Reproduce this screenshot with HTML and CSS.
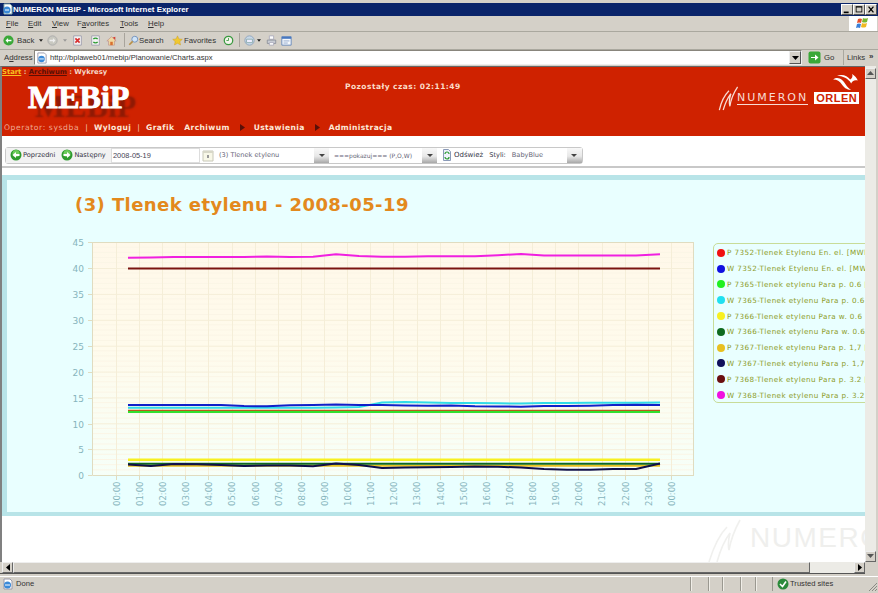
FILE: index.html
```html
<!DOCTYPE html>
<html lang="pl">
<head>
<meta charset="utf-8">
<title>NUMERON MEBIP</title>
<link rel="stylesheet" href="styles.css">
</head>
<body>
<div class="window">
  <div class="titlebar">
    <svg class="ico12" viewBox="0 0 12 12"><path d="M2 1h6l2 2v8H2z" fill="#fff" stroke="#8aa"/><circle cx="5" cy="7" r="3.500" fill="#3a8ad8"/><path d="M3 7h4" stroke="#fff"/></svg>
    <span class="title-text">NUMERON MEBIP - Microsoft Internet Explorer</span>
    <div class="winbtns">
      <span class="winbtn"><svg viewBox="0 0 12 11"><rect x="2" y="8" width="6" height="2" fill="#000"/></svg></span>
      <span class="winbtn"><svg viewBox="0 0 12 11"><rect x="2.500" y="2.500" width="7" height="6" fill="none" stroke="#000"/><path d="M2 2h8" stroke="#000"/></svg></span>
      <span class="winbtn"><svg viewBox="0 0 12 11"><path d="M3 2l6 7M9 2l-6 7" stroke="#000" stroke-width="1.600"/></svg></span>
    </div>
  </div>

  <div class="menubar">
    <span class="m-file"><u>F</u>ile</span>
    <span class="m-edit"><u>E</u>dit</span>
    <span class="m-view"><u>V</u>iew</span>
    <span class="m-fav">F<u>a</u>vorites</span>
    <span class="m-tools"><u>T</u>ools</span>
    <span class="m-help"><u>H</u>elp</span>
    <span class="winlogo"><svg viewBox="0 0 14 13" width="14" height="13"><path d="M2 2q2-1 4 0l-1 4q-2-1-4 0z" fill="#e8502a"/><path d="M7 1q2 1 5 0l-1 4q-3 1-5 0z" fill="#7ab82e"/><path d="M1 7q2-1 4 0l-1 4q-2-1-4 0z" fill="#3a80d8"/><path d="M6 6q2 1 5 0l-1 4q-3 1-5 0z" fill="#f0b820"/></svg></span>
  </div>

  <div class="toolbar">
    <svg class="ico13 t-back" viewBox="0 0 13 13"><circle cx="6.500" cy="6.500" r="6" fill="#3aa838"/><path d="M3 6.500l3-3v2h4v2H6v2z" fill="#fff"/></svg>
    <span class="t-backlabel">Back</span>
    <svg class="ico5 t-dd1" viewBox="0 0 5 3"><path d="M0 0h5L2.500 3z" fill="#222"/></svg>
    <svg class="ico13 t-fwd" viewBox="0 0 13 13"><circle cx="6.500" cy="6.500" r="5.500" fill="#c8c8c0" stroke="#aaa"/><path d="M10 6.500l-3-3v2H3v2h4v2z" fill="#eee"/></svg>
    <svg class="ico5 t-dd2" viewBox="0 0 5 3"><path d="M0 0h5L2.500 3z" fill="#999"/></svg>
    <svg class="ico13 t-stop" viewBox="0 0 13 13"><path d="M2 1h9v11H2z" fill="#f4f4f4" stroke="#99a"/><path d="M4 4l5 5M9 4l-5 5" stroke="#d83030" stroke-width="2"/></svg>
    <svg class="ico13 t-ref" viewBox="0 0 13 13"><path d="M2 1h9v11H2z" fill="#f4f4f4" stroke="#99a"/><path d="M4 5a3 3 0 0 1 5 0M9 8a3 3 0 0 1-5 0" fill="none" stroke="#2a9a30" stroke-width="1.600"/></svg>
    <svg class="ico13 t-home" viewBox="0 0 13 13"><path d="M1 7l5.500-5L12 7h-2v5H3V7z" fill="#f0d8a0" stroke="#b88" stroke-width=".7"/><path d="M5 8h3v4H5z" fill="#d87030"/><path d="M8 3l3 3V2z" fill="#d84030"/></svg>
    <span class="t-sep t-sep1"></span>
    <svg class="ico13 t-search" viewBox="0 0 13 13"><circle cx="8" cy="5" r="3.500" fill="#cfe4f8" stroke="#6a8ab8"/><path d="M5.500 7.500L1.500 11.500" stroke="#b89048" stroke-width="2"/></svg>
    <span class="t-searchlabel">Search</span>
    <svg class="ico13 t-star" viewBox="0 0 13 13"><path d="M6.500 1l1.700 3.600 4 .5-2.900 2.700.8 4-3.600-2-3.600 2 .8-4L.8 5.100l4-.5z" fill="#f0c830" stroke="#c89820" stroke-width=".5"/></svg>
    <span class="t-favlabel">Favorites</span>
    <svg class="ico13 t-hist" viewBox="0 0 13 13"><circle cx="6.500" cy="6.500" r="5" fill="#f4f4ec" stroke="#3a9a40" stroke-width="1.500"/><path d="M6.500 3.500v3H4" fill="none" stroke="#3a9a40"/></svg>
    <span class="t-sep t-sep2"></span>
    <svg class="ico13 t-mail" viewBox="0 0 13 13"><circle cx="6.500" cy="6.500" r="5.500" fill="#c8d8e8" stroke="#8aa0b8"/><path d="M3 5h7v4H3z" fill="#eef" stroke="#8aa"/></svg>
    <svg class="ico5 t-dd3" viewBox="0 0 5 3"><path d="M0 0h5L2.500 3z" fill="#222"/></svg>
    <svg class="ico13 t-print" viewBox="0 0 13 13"><path d="M4 1h5v4H4z" fill="#fff" stroke="#aab"/><path d="M1.500 6h10v4h-10z" fill="#c8ccd4" stroke="#8a8e98"/><path d="M4 9h5v3H4z" fill="#fff" stroke="#aab"/></svg>
    <svg class="ico13 t-edit" viewBox="0 0 13 13"><path d="M1 2h11v10H1z" fill="#f4f8fc" stroke="#5a80b8"/><path d="M1 2h11v2.500H1z" fill="#4878c0"/><path d="M3 7h7M3 9.500h5" stroke="#88a0c8"/></svg>
  </div>

  <div class="addressbar">
    <span class="a-label">A<u>d</u>dress</span>
    <div class="a-field">
      <svg class="ico12" viewBox="0 0 13 13"><path d="M2 1h7l2 2v9H2z" fill="#fff" stroke="#99a"/><circle cx="6" cy="7.500" r="3.500" fill="#3a8ad8"/><path d="M3.500 7.500h5" stroke="#fff"/></svg>
      <span class="a-url">http://bplaweb01/mebip/Planowanie/Charts.aspx</span>
      <span class="a-drop"><svg viewBox="0 0 7 4" width="7" height="4"><path d="M0 0h7L3.500 4z" fill="#000"/></svg></span>
    </div>
    <svg class="ico13 a-go" viewBox="0 0 13 13"><rect x=".5" y=".5" width="12" height="12" rx="2" fill="#3aa838"/><path d="M3 6h4V3.500L10.500 6.500 7 9.500V7H3z" fill="#fff"/></svg>
    <span class="a-golabel">Go</span>
    <span class="a-sep"></span>
    <span class="a-links">Links</span>
    <span class="a-more">»</span>
  </div>

  <div class="client">
    <div class="viewport">
      <header class="site-head">
        <nav class="crumbs"><a class="c-start">Start</a><span> : </span><a class="c-arch">Archiwum</a><span> : </span><b>Wykresy</b></nav>
        <div class="head-main">
          <div class="mebip">MEBiP</div>
          <div class="timer">Pozostały czas: 02:11:49</div>
          <div class="brands">
            <div class="numeron">
              <svg class="num-ico" viewBox="0 0 20 26" width="20" height="25"><path d="M1 25C3 16 7 9 11 5M5 25C7 18 10 12 13 8C11 14 11 18 12 21C13 14 16 7 20 1" fill="none" stroke="#f8dcd4" stroke-width="1.300"/></svg>
              <span class="num-text">NUMERON</span>
            </div>
            <div class="orlen">
              <svg class="eagle" viewBox="0 0 26 18" width="25" height="17"><path d="M0 7C5 3 10 7 13 12C15 15 17 17 19 18C14 18 11 15 9 12C7 9 4 7 0 7z" fill="#fff"/><path d="M4 3C10 1 15 3 18 7C20 5 21 4 20 1C23 3 25 5 26 8C22 7 20 9 19 11C16 6 10 3 4 3z" fill="#fff"/></svg>
              <span class="orlen-box">ORLEN</span>
            </div>
          </div>
        </div>
        <div class="opnav">
          <span class="op">Operator: sysdba</span><span class="pipe">|</span><a>Wyloguj</a><span class="pipe">|</span><a>Grafik</a><a class="gap-a">Archiwum</a>
          <svg class="arr" viewBox="0 0 5 7" width="5" height="7"><path d="M0 0l5 3.500L0 7z" fill="#5a1008"/></svg><a>Ustawienia</a>
          <svg class="arr" viewBox="0 0 5 7" width="5" height="7"><path d="M0 0l5 3.500L0 7z" fill="#5a1008"/></svg><a>Administracja</a>
        </div>
      </header>

      <div class="toolstrip">
        <div class="tools">
          <div class="pager">
            <svg class="navico" viewBox="0 0 12 12"><circle cx="6" cy="6" r="5.500" fill="#2f9a2f"/><circle cx="6" cy="4.500" r="3.500" fill="#6ccb5a"/><path d="M2.500 6l3.500-3v2h3.500v2H6v2z" fill="#fff"/></svg>
            <span class="nav-l">Poprzedni</span>
            <svg class="navico nav2" viewBox="0 0 12 12"><circle cx="6" cy="6" r="5.500" fill="#2f9a2f"/><circle cx="6" cy="4.500" r="3.500" fill="#6ccb5a"/><path d="M9.500 6L6 3v2H2.500v2H6v2z" fill="#fff"/></svg>
            <span class="nav-l">Następny</span>
          </div>
          <div class="datebox">2008-05-19</div>
          <svg class="calico" viewBox="0 0 14 14" width="14" height="14"><path d="M2 3h10v10H2z" fill="#f8f8e8" stroke="#c8c8b8"/><path d="M2 3h10v2H2z" fill="#d8d8c8"/><path d="M7 7v3" stroke="#999" stroke-width="2"/></svg>
          <div class="sel sel-1"><span class="sel-t">(3) Tlenek etylenu</span><span class="dd"><svg viewBox="0 0 6 3" width="6" height="3"><path d="M0 0h6L3 3z" fill="#444"/></svg></span></div>
          <div class="sel sel-2"><span class="sel-t">===pokazuj=== (P,O,W)</span><span class="dd"><svg viewBox="0 0 6 3" width="6" height="3"><path d="M0 0h6L3 3z" fill="#444"/></svg></span></div>
          <svg class="refico" viewBox="0 0 8 12" width="8" height="12"><path d="M.5.500h5l2 2v9h-7z" fill="#eef2fa" stroke="#8a9ab8"/><path d="M2 5a2 2 0 0 1 4 0M6 8a2 2 0 0 1-4 0" fill="none" stroke="#2a9a30" stroke-width="1.200"/></svg>
          <span class="nav-l ref-l">Odśwież</span>
          <span class="nav-l style-l">Styli:</span>
          <div class="sel sel-3"><span class="sel-t">BabyBlue</span><span class="dd"><svg viewBox="0 0 6 3" width="6" height="3"><path d="M0 0h6L3 3z" fill="#444"/></svg></span></div>
        </div>
      </div>

      <main class="panel">
        <h1 class="chart-title">(3) Tlenek etylenu - 2008-05-19</h1>
        <div class="chart-row">
          <svg class="chart" viewBox="7 235 700 277" width="700" height="277">
            <defs>
              <linearGradient id="plotbg" x1="0" y1="0" x2="0" y2="1">
                <stop offset="0" stop-color="#fff8e9"/><stop offset=".45" stop-color="#fffbec"/><stop offset="1" stop-color="#f6fff8"/>
              </linearGradient>
            </defs>
            <rect x="92" y="243" width="602" height="233.500" fill="url(#plotbg)"/>
            <path class="minor" d="M92 248.200H694M92 253.400H694M92 258.500H694M92 263.700H694M92 274.100H694M92 279.300H694M92 284.400H694M92 289.600H694M92 299.900H694M92 305.100H694M92 310.300H694M92 315.500H694M92 325.800H694M92 331H694M92 336.200H694M92 341.400H694M92 351.800H694M92 356.900H694M92 362.100H694M92 367.300H694M92 377.600H694M92 382.800H694M92 388H694M92 393.200H694M92 403.600H694M92 408.700H694M92 413.900H694M92 419.100H694M92 429.400H694M92 434.600H694M92 439.800H694M92 445H694M92 455.300H694M92 460.500H694M92 465.700H694M92 470.900H694"/>
            <path class="major" d="M92 269.500H694M92 295.400H694M92 321.300H694M92 347.200H694M92 373.100H694M92 398.900H694M92 424.800H694M92 450.700H694"/>
            <path class="major" d="M116.500 243V476M139.500 243V476M162.500 243V476M185.500 243V476M208.500 243V476M232.500 243V476M255.500 243V476M278.500 243V476M301.500 243V476M324.500 243V476M347.500 243V476M370.500 243V476M393.500 243V476M417.500 243V476M440.500 243V476M463.500 243V476M486.500 243V476M509.500 243V476M532.500 243V476M555.500 243V476M578.500 243V476M602.500 243V476M625.500 243V476M648.500 243V476M671.500 243V476"/>
            <path class="axis" d="M92.500 243V476.500H694M693.500 243V476.500M92.500 243.500H694"/>
            <path class="axis" d="M88 243.500H92M88 269.500H92M88 295.500H92M88 321.500H92M88 347.500H92M88 373.500H92M88 399.500H92M88 425.500H92M88 450.500H92M88 476.500H92"/>
            <path class="axis" d="M116.500 477V481M139.500 477V481M162.500 477V481M185.500 477V481M208.500 477V481M232.500 477V481M255.500 477V481M278.500 477V481M301.500 477V481M324.500 477V481M347.500 477V481M370.500 477V481M393.500 477V481M417.500 477V481M440.500 477V481M463.500 477V481M486.500 477V481M509.500 477V481M532.500 477V481M555.500 477V481M578.500 477V481M602.500 477V481M625.500 477V481M648.500 477V481M671.500 477V481"/>

            <g class="ylab">
              <text x="84" y="246.500">45</text><text x="84" y="272.500">40</text><text x="84" y="298.500">35</text><text x="84" y="324.500">30</text><text x="84" y="350.500">25</text><text x="84" y="376.500">20</text><text x="84" y="402.500">15</text><text x="84" y="428.500">10</text><text x="84" y="453.500">5</text><text x="84" y="479.500">0</text>
            </g>
            <g class="xlab">
              <text transform="translate(120 507) rotate(-90)">00:00</text>
              <text transform="translate(143 507) rotate(-90)">01:00</text>
              <text transform="translate(166 507) rotate(-90)">02:00</text>
              <text transform="translate(189 507) rotate(-90)">03:00</text>
              <text transform="translate(212 507) rotate(-90)">04:00</text>
              <text transform="translate(235 507) rotate(-90)">05:00</text>
              <text transform="translate(259 507) rotate(-90)">06:00</text>
              <text transform="translate(282 507) rotate(-90)">07:00</text>
              <text transform="translate(305 507) rotate(-90)">08:00</text>
              <text transform="translate(328 507) rotate(-90)">09:00</text>
              <text transform="translate(351 507) rotate(-90)">10:00</text>
              <text transform="translate(374 507) rotate(-90)">11:00</text>
              <text transform="translate(397 507) rotate(-90)">12:00</text>
              <text transform="translate(420 507) rotate(-90)">13:00</text>
              <text transform="translate(444 507) rotate(-90)">14:00</text>
              <text transform="translate(467 507) rotate(-90)">15:00</text>
              <text transform="translate(490 507) rotate(-90)">16:00</text>
              <text transform="translate(513 507) rotate(-90)">17:00</text>
              <text transform="translate(536 507) rotate(-90)">18:00</text>
              <text transform="translate(559 507) rotate(-90)">19:00</text>
              <text transform="translate(582 507) rotate(-90)">20:00</text>
              <text transform="translate(605 507) rotate(-90)">21:00</text>
              <text transform="translate(629 507) rotate(-90)">22:00</text>
              <text transform="translate(652 507) rotate(-90)">23:00</text>
              <text transform="translate(675 507) rotate(-90)">00:00</text>
            </g>

            <polyline class="s s-red" points="128,411.400 660,411.400"/>
            <polyline class="s s-green" points="128,412.900 660,412.900"/>
            <polyline class="s s-cyan" points="128,408.800 151,408.800 174,408.800 197,408.800 221,408.800 244,408.800 267,408.800 290,408.800 313,408.800 336,408.500 359,408 372,405.500 382,403.500 405,403 428,403.500 451,404 475,404 498,404.300 521,404.500 544,404 567,404 590,403.800 613,403.800 636,403.800 660,403.500"/>
            <polyline class="s s-blue" points="128,406 151,406 174,406 197,406 221,406 244,407 267,407.300 290,406.300 313,406 336,405.500 359,406 382,406 405,406.500 428,406.800 451,406.500 475,407.300 498,407.500 521,407.700 544,407 567,407 590,406.700 613,406 636,405.700 660,406"/>
            <polyline class="s s-yellow" points="128,460.800 660,460.800"/>
            <polyline class="s s-gold" points="128,466.800 660,466.800"/>
            <polyline class="s s-dgreen" points="128,464.800 660,464.800"/>
            <polyline class="s s-navy" points="128,465.500 151,467 174,465 197,465.300 221,466 244,467 267,466.500 290,466.500 313,467.300 336,464.500 359,466 382,469 405,468.500 428,468.300 451,468 475,467.500 498,467.800 521,468.500 544,470 567,470.800 590,470.800 613,470 636,470 660,464.500"/>
            <polyline class="s s-brown" points="128,269.500 660,269.500"/>
            <polyline class="s s-mag" points="128,258.700 151,258.500 174,258 197,258 221,258 244,258 267,257.400 290,258 313,257.800 336,255.300 359,257 382,257.800 405,257.800 428,257.300 451,257.200 475,257.200 498,256.300 521,255 544,256.500 567,256.500 590,256.600 613,256.600 636,256.500 660,255.300"/>
          </svg>
          <ul class="legend">
            <li><i class="dot d1"></i>P 7352-Tlenek Etylenu En. el. [MWh]</li>
            <li><i class="dot d2"></i>W 7352-Tlenek Etylenu En. el. [MWh]</li>
            <li><i class="dot d3"></i>P 7365-Tlenek etylenu Para p. 0.6 [t/h]</li>
            <li><i class="dot d4"></i>W 7365-Tlenek etylenu Para p. 0.6 [t/h]</li>
            <li><i class="dot d5"></i>P 7366-Tlenek etylenu Para w. 0.6 [t/h]</li>
            <li><i class="dot d6"></i>W 7366-Tlenek etylenu Para w. 0.6 [t/h]</li>
            <li><i class="dot d7"></i>P 7367-Tlenek etylenu Para p. 1,7 [t/h]</li>
            <li><i class="dot d8"></i>W 7367-Tlenek etylenu Para p. 1,7 [t/h]</li>
            <li><i class="dot d9"></i>P 7368-Tlenek etylenu Para p. 3.2 [t/h]</li>
            <li><i class="dot d10"></i>W 7368-Tlenek etylenu Para p. 3.2 [t/h]</li>
          </ul>
        </div>
      </main>

      <div class="watermark">
        <svg viewBox="0 0 34 44" width="34" height="44"><path d="M2 43C6 30 12 16 20 8M10 43C13 32 17 22 23 14C21 22 21 27 22 31C24 20 28 10 33 1" fill="none" stroke="#f0f0ee" stroke-width="1.600"/></svg>
        <span>NUMERON</span>
      </div>
    </div>
    <div class="vscroll">
      <span class="sbtn"><svg viewBox="0 0 7 4" width="7" height="4"><path d="M0 4h7L3.500 0z" fill="#555"/></svg></span>
      <span class="sbtn"><svg viewBox="0 0 7 4" width="7" height="4"><path d="M0 0h7L3.500 4z" fill="#555"/></svg></span>
    </div>
  </div>

  <div class="hscroll">
    <span class="sbtn"><svg viewBox="0 0 4 7" width="4" height="7"><path d="M4 0v7L0 3.500z" fill="#000"/></svg></span>
    <span class="hthumb"></span>
    <span class="htrack"></span>
    <span class="sbtn"><svg viewBox="0 0 4 7" width="4" height="7"><path d="M0 0v7l4-3.500z" fill="#000"/></svg></span>
  </div>

  <div class="statusbar">
    <svg class="ico12" viewBox="0 0 12 12"><path d="M2 1h6l2 2v8H2z" fill="#fff" stroke="#99a"/><circle cx="5.500" cy="7" r="3.500" fill="#3a8ad8"/><path d="M3 7h5" stroke="#fff"/></svg>
    <span class="st-done">Done</span>
    <span class="st-cell st-c1"></span><span class="st-cell st-c2"></span><span class="st-cell st-c3"></span><span class="st-cell st-c4"></span><span class="st-cell st-c5"></span>
    <span class="st-zone">
      <svg class="ico12" viewBox="0 0 12 12"><circle cx="6" cy="6" r="5.500" fill="#2a8a3a"/><path d="M3 6l2.500 2.500L9 3.500" fill="none" stroke="#fff" stroke-width="1.600"/></svg>
      Trusted sites
    </span>
    <svg class="grip" viewBox="0 0 11 11" width="11" height="11"><path d="M10 2l-8 8M10 5l-5 5M10 8l-2 2" stroke="#8a8a84"/></svg>
  </div>
</div>
</body>
</html>
```

FILE: styles.css
```css
* { box-sizing: border-box; }
html, body { margin: 0; padding: 0; overflow: hidden; }
body { font-family: "Liberation Sans", Arial, sans-serif; background: #d4d0c8; }
.window { width: 878px; height: 593px; display: flex; flex-direction: column; overflow: hidden; background: #d4d0c8; color: #222; font-size: 7.800px; }
svg { display: block; flex: none; }
.ico12 { width: 12px; height: 12px; }
.ico13 { width: 11px; height: 11px; }
.ico5 { width: 4px; height: 3px; }

.titlebar { height: 13px; margin-top: 3px; padding: 0 1px 0 2px; background: #0a246a; display: flex; align-items: center; color: #fff; }
.title-text { margin-left: -1px; font-weight: bold; font-size: 7.900px; }
.winbtns { margin-left: auto; display: flex; }
.winbtn { width: 12px; height: 11px; background: #d4d0c8; border: 1px solid; border-color: #fff #555 #555 #fff; display: flex; align-items: center; justify-content: center; }
.winbtn svg { width: 10px; height: 9px; }

.menubar { height: 17px; display: flex; align-items: center; border-bottom: 1px solid #aaa89f; padding-left: 6px; color: #333; }
.m-file { width: 22px; }
.m-edit { width: 24px; }
.m-view { width: 25px; }
.m-fav { width: 43px; }
.m-tools { width: 28px; }
.winlogo { margin-left: auto; width: 28px; height: 15px; background: #fff; display: flex; align-items: center; justify-content: center; margin-right: 1px; }

.toolbar { height: 18px; display: flex; align-items: center; padding-left: 3px; color: #333; border-bottom: 1px solid #aaa89f; }
.t-backlabel { margin-left: 3px; width: 16px; }
.t-dd1 { margin-left: 6px; }
.t-fwd { margin-left: 4px; }
.t-dd2 { margin-left: 5px; }
.t-stop { margin-left: 5px; }
.t-ref { margin-left: 7px; }
.t-home { margin-left: 5px; }
.t-sep { width: 1px; height: 14px; background: #a8a49c; }
.t-sep1 { margin-left: 7px; }
.t-search { margin-left: 3px; }
.t-searchlabel { margin-left: 0; width: 23px; }
.t-star { margin-left: 10px; }
.t-favlabel { margin-left: 1px; width: 30px; }
.t-hist { margin-left: 9px; }
.t-sep2 { margin-left: 5px; }
.t-mail { margin-left: 4px; }
.t-dd3 { margin-left: 2px; }
.t-print { margin-left: 5px; }
.t-edit { margin-left: 4px; }

.addressbar { height: 17px; display: flex; align-items: center; padding-left: 4px; color: #333; }
.a-label { width: 30px; }
.a-field { width: 768px; height: 15px; background: #fff; border: 1px solid; border-color: #88857c #eee #eee #88857c; display: flex; align-items: center; padding-left: 1px; }
.a-url { margin-left: 2px; color: #333; font-size: 7.600px; }
.a-drop { margin-left: auto; width: 12px; height: 13px; background: #d4d0c8; border: 1px solid; border-color: #eee #555 #555 #eee; display: flex; align-items: center; justify-content: center; }
.a-go { margin-left: 6px; width: 13px; height: 13px; }
.a-golabel { margin-left: 3px; width: 12px; }
.a-sep { width: 1px; height: 15px; background: #aaa89f; margin-left: 7px; }
.a-links { margin-left: 3px; width: 22px; }
.a-more { font-size: 8px; font-weight: bold; margin-top: -3px; }

.client { height: 496px; display: flex; }
.viewport { position: relative; width: 865px; height: 496px; overflow: hidden; background: #fff; border-left: 2px solid #808080; border-top: 1px solid #666; }

.site-head { height: 69px; background: #cf2200; font-family: "DejaVu Sans", Verdana, sans-serif; color: #fff; display: flex; flex-direction: column; overflow: hidden; }
.crumbs { height: 11px; font-size: 6.800px; line-height: 11px; font-weight: bold; color: #f6d8c8; }
.crumbs span { color: #e8c0a0; }
.c-start { color: #f8c020; text-decoration: underline; }
.c-arch { color: #5a0f06; text-decoration: underline; }
.head-main { display: flex; height: 43px; }
.mebip { margin-left: 26px; width: 317px; font-family: "Liberation Serif", serif; font-weight: bold; font-size: 32px; line-height: 30px; margin-top: 4px; color: #fff; -webkit-text-stroke: 1px #fff; text-shadow: 7px 9px 2px rgba(90, 20, 10, .55); }
.timer { font-size: 7.500px; font-weight: bold; letter-spacing: .45px; color: #fbdcc8; margin-top: 4px; width: 373px; }
.brands { display: flex; align-items: flex-end; gap: 6px; height: 26px; }
.numeron { display: flex; align-items: flex-end; }
.num-ico { margin-bottom: -7px; margin-right: -1px; }
.num-text { font-size: 11px; letter-spacing: 2px; color: #f8dcd4; border-bottom: 1px solid #f8dcd4; line-height: 10px; padding-bottom: 1px; margin-bottom: -1px; }
.orlen { display: flex; flex-direction: column; align-items: flex-end; width: 45px; }
.eagle { margin: 0 1px 2px 0; }
.orlen-box { background: #fff; color: #cf2200; font-family: "Liberation Sans", sans-serif; font-weight: bold; font-size: 11px; letter-spacing: .5px; line-height: 12px; width: 45px; text-align: center; }
.opnav { display: flex; align-items: center; height: 14px; padding-left: 2px; font-size: 7.600px; font-weight: bold; letter-spacing: .36px; color: #fde8d8; white-space: nowrap; }
.opnav a { color: #fde8d8; }
.op { font-weight: normal; color: #f0a890; letter-spacing: .6px; }
.pipe { font-weight: normal; margin: 0 6px; color: #f6c8b8; }
.gap-a { margin-left: 10px; }
.arr { margin: 0 9px 0 10px; }

.toolstrip { height: 32px; padding: 11px 0 0 3px; border-bottom: 2px solid #c8c8c8; }
.tools { width: 578px; height: 17px; border: 1px solid #c8c8c8; border-radius: 3px; display: flex; align-items: center; font-family: "DejaVu Sans", Verdana, sans-serif; font-size: 6.600px; color: #445; }
.pager { display: flex; align-items: center; width: 105px; height: 15px; background: #f2f2f2; padding-left: 4px; }
.navico { width: 12px; height: 12px; margin-right: 1px; }
.nav2 { margin-left: 6px; }
.nav-l { color: #334; }
.datebox { width: 89px; height: 15px; border: 1px solid #ddd; background: #fff; padding-left: 1px; line-height: 13px; font-family: "Liberation Sans", sans-serif; font-size: 7.400px; color: #445; }
.calico { margin-left: 1px; }
.sel { display: flex; align-items: center; height: 15px; color: #667; }
.sel-t { white-space: nowrap; }
.sel .dd { margin-left: auto; width: 15px; height: 15px; display: flex; align-items: center; justify-content: center; background: linear-gradient(#f8f8f8, #e8e8e8 55%, #a8a8a8); }
.sel-1 { margin-left: 4px; width: 110px; }
.sel-2 { margin-left: 5px; width: 103px; font-size: 6px; }
.sel-3 { margin-left: 6px; width: 70px; }
.refico { margin-left: 6px; }
.ref-l { margin-left: 3px; font-size: 7px; }
.style-l { margin-left: 6px; }

.panel { position: relative; margin-top: 7px; height: 341px; width: 900px; background: #e9ffff; border: 5px solid #b8e4e8; border-width: 5px 0 4px 5px; overflow: hidden; }
.chart-title { margin: 0; padding: 13px 0 0 68px; height: 54px; font-family: "DejaVu Sans", Verdana, sans-serif; font-weight: bold; font-size: 18px; line-height: 23px; letter-spacing: .42px; color: #e3891d; }
.chart-row { display: flex; align-items: flex-start; }
.chart { margin-right: 6px; }
.chart text { font-family: "DejaVu Sans", Verdana, sans-serif; font-size: 8.500px; fill: #86b4bc; }
.ylab text { text-anchor: end; font-size: 9px; }
.minor { stroke: #fbf5e6; stroke-width: 1; fill: none; }
.major { stroke: #f5eed8; stroke-width: 1; fill: none; }
.axis { stroke: #e0dcc0; stroke-width: 1; fill: none; }
.s { fill: none; stroke-width: 2; stroke-linejoin: round; stroke-linecap: butt; }
.s-red { stroke: #b85a18; stroke-width: 1.500; }
.s-green { stroke: #30e030; }
.s-cyan { stroke: #30dce8; }
.s-blue { stroke: #1020c8; }
.s-yellow { stroke: #f8f020; stroke-width: 2.500; }
.s-gold { stroke: #e8c020; }
.s-dgreen { stroke: #0e6a1e; }
.s-navy { stroke: #10104a; }
.s-brown { stroke: #7a1410; }
.s-mag { stroke: #f020e0; }

.legend { list-style: none; margin: 9px 0 0 0; padding: 1px 0 0 3px; width: 300px; height: 160px; flex: none; border: 1px solid #c8dc98; border-radius: 5px; font-family: "DejaVu Sans", Verdana, sans-serif; font-size: 7.200px; letter-spacing: .42px; color: #8c9c28; white-space: nowrap; }
.legend li { height: 15.800px; display: flex; align-items: center; }
.dot { width: 8px; height: 8px; border-radius: 50%; margin-right: 2px; flex: none; }
.d1 { background: #f01010; } .d2 { background: #1010e0; } .d3 { background: #20f020; } .d4 { background: #20e0f0; } .d5 { background: #f8f020; }
.d6 { background: #0e6a1e; } .d7 { background: #e8c020; } .d8 { background: #10105a; } .d9 { background: #6a1010; } .d10 { background: #f010e0; }

.watermark { position: absolute; left: 705px; top: 452px; display: flex; align-items: flex-start; color: #efefed; font-family: "Liberation Sans", sans-serif; font-size: 28px; letter-spacing: 1.500px; white-space: nowrap; }
.watermark span { margin: 2px 0 0 9px; line-height: 33px; }

.vscroll { width: 11px; height: 496px; background: #ecebe6; margin-right: 2px; display: flex; flex-direction: column; justify-content: space-between; padding-top: 2px; }
.sbtn { width: 11px; height: 11px; flex: none; background: #d4d0c8; border: 1px solid; border-color: #eee #666 #666 #eee; display: flex; align-items: center; justify-content: center; }

.hscroll { height: 12px; display: flex; padding-left: 2px; width: 865px; border-bottom: 1px solid #555; }
.hthumb { width: 797px; background: #d4d0c8; border: 1px solid; border-color: #eee #666 #666 #eee; }
.htrack { flex: 1; background: #ecebe6; }

.statusbar { height: 17px; margin-top: 2px; border-top: 1px solid #fff; padding: 0 0 2px 2px; display: flex; align-items: center; position: relative; font-size: 7.600px; color: #333; }
.st-done { margin-left: 2px; width: 674px; }
.st-cell { height: 14px; border-left: 1px solid #9a9890; box-shadow: inset 1px 0 #f0eee8; }
.st-c1 { width: 18px; } .st-c2 { width: 14px; } .st-c3 { width: 18px; } .st-c4 { width: 15px; } .st-c5 { width: 17px; }
.st-zone { display: flex; align-items: center; gap: 1px; height: 14px; width: 85px; padding-left: 4px; border-left: 1px solid #9a9890; }
.grip { position: absolute; right: 0; bottom: 1px; }
```
